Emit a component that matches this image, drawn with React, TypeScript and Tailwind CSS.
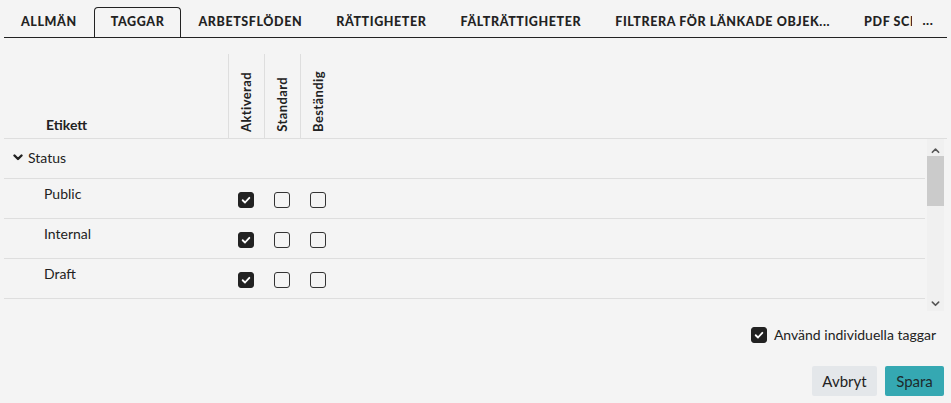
import { useState } from "react";

const TABS = [
  "Allmän",
  "Taggar",
  "Arbetsflöden",
  "Rättigheter",
  "Fälträttigheter",
  "Filtrera för länkade objek...",
  "PDF Schema",
];

const COLUMNS = ["Aktiverad", "Standard", "Beständig"];

const ROWS = [
  { label: "Public", values: [true, false, false] },
  { label: "Internal", values: [true, false, false] },
  { label: "Draft", values: [true, false, false] },
];

const Check = ({ checked }: { checked: boolean }) => (
  <span
    className={`flex h-4 w-4 items-center justify-center rounded-[3px] border ${
      checked ? "border-[#222] bg-[#222]" : "border-[#333] bg-transparent"
    }`}
  >
    {checked && (
      <svg viewBox="0 0 12 12" className="h-[10px] w-[10px]">
        <path
          d="M2 6.3 L4.8 9 L10 3.4"
          fill="none"
          stroke="#fff"
          strokeWidth="2.2"
          strokeLinecap="round"
          strokeLinejoin="round"
        />
      </svg>
    )}
  </span>
);

const Chevron = ({
  up,
  className,
  width = 1.8,
}: {
  up?: boolean;
  className: string;
  width?: number;
}) => (
  <svg viewBox="0 0 10 10" className={className}>
    <path
      d={up ? "M1.5 7 L5 3.5 L8.5 7" : "M1.5 3.5 L5 7 L8.5 3.5"}
      fill="none"
      stroke="currentColor"
      strokeWidth={width}
      strokeLinecap="round"
      strokeLinejoin="round"
    />
  </svg>
);

const App = () => {
  const [active, setActive] = useState(1);
  const [individual, setIndividual] = useState(true);

  return (
    <div className="h-[403px] w-[951px] overflow-hidden bg-[#f4f4f4] px-1 font-['Lato',sans-serif] text-[#222]">
      {/* tabs */}
      <div className="flex h-[38px] items-end border-b border-[#222] pr-[3px]">
        <div className="flex min-w-0 flex-1 items-end overflow-hidden">
          {TABS.map((tab, i) => (
            <div
              key={tab}
              onClick={() => setActive(i)}
              className={`-mb-px flex h-[31px] shrink-0 cursor-pointer items-center whitespace-nowrap rounded-t-[4px] border border-b-0 px-4 pb-[1px] text-[12.5px] font-black uppercase tracking-[0.048em] ${
                active === i
                  ? "border-[#222] bg-[#f4f4f4] pb-[2px]"
                  : "border-transparent"
              }`}
            >
              {tab}
            </div>
          ))}
        </div>
        <div className="flex h-[31px] w-[32px] shrink-0 items-center justify-center pb-[1px] text-[13px] font-black tracking-[0.05em]">
          ...
        </div>
      </div>

      {/* header */}
      <div className="mt-4 flex h-[85px] border-b border-[#dedede] pr-[22px]">
        <div className="flex w-[224px] items-end pb-[3px] pl-[42px] text-[14px] font-bold">
          Etikett
        </div>
        {COLUMNS.map((col) => (
          <div
            key={col}
            className="flex w-9 items-end justify-center border-l border-[#dedede] pb-[6px]"
          >
            <span className="rotate-180 text-[13px] font-bold tracking-[0.03em] [writing-mode:vertical-rl]">
              {col}
            </span>
          </div>
        ))}
      </div>

      {/* body */}
      <div className="flex h-[172px]">
        <div className="min-w-0 flex-1 overflow-hidden">
          <div className="flex h-10 items-center gap-[5px] border-b border-[#dedede] pb-[3px] pl-[9px] text-[14px]">
            <Chevron className="h-[10px] w-[10px] text-[#222]" width={2.4} />
            Status
          </div>
          {ROWS.map((row) => (
            <div key={row.label} className="flex h-10 border-b border-[#dedede]">
              <div className="w-[224px] pl-10 pt-[4px] text-[14px]">{row.label}</div>
              {row.values.map((v, j) => (
                <div key={j} className="flex w-9 items-center justify-center pt-[3px]">
                  <Check checked={v} />
                </div>
              ))}
            </div>
          ))}
        </div>
        <div className="ml-[2px] mr-[3px] flex w-[17px] flex-col items-center bg-[#f0f0f0]">
          <Chevron up className="mt-[7px] h-[9px] w-[9px] text-[#555]" />
          <div className="mt-[1px] h-[50px] w-full bg-[#cbcbcb]" />
          <div className="flex-1" />
          <Chevron className="mb-[3px] h-[9px] w-[9px] text-[#555]" />
        </div>
      </div>

      {/* footer */}
      <div className="mt-[13px] flex justify-end pr-[11px]">
        <label
          className="flex cursor-pointer items-center gap-[7px] text-[14px]"
          onClick={() => setIndividual((p) => !p)}
        >
          <Check checked={individual} />
          Använd individuella taggar
        </label>
      </div>
      <div className="mt-[21px] flex justify-end gap-2 pr-[3px]">
        <button className="h-[30px] w-[65px] rounded-[2px] bg-[#e4e7ea] text-[15px] text-[#222]">
          Avbryt
        </button>
        <button className="h-[30px] w-[59px] rounded-[2px] bg-[#35a8b2] text-[15px] text-[#1d2a2c]">
          Spara
        </button>
      </div>
    </div>
  );
};

export default App;
